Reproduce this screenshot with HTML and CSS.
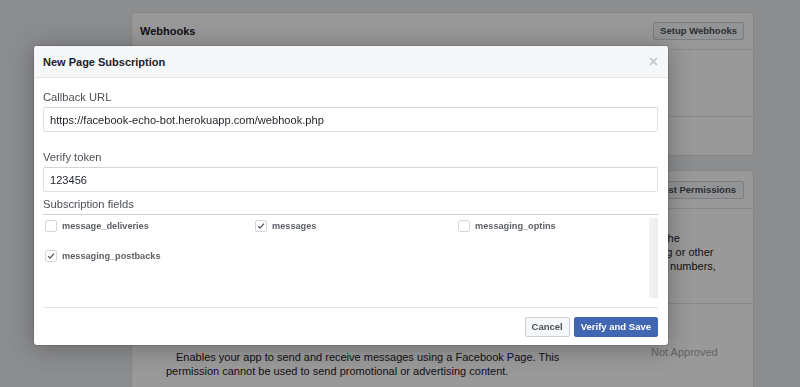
FILE: index.html
```html
<!DOCTYPE html>
<html lang="en">
<head>
    <meta charset="UTF-8">
    <meta name="viewport" content="width=device-width, initial-scale=1.0">
    <title>Messenger Settings</title>
    <link rel="stylesheet" href="styles.css">
</head>
<body>
    <div class="page">
        <section class="panel">
            <div class="panel-header">
                <h2>Webhooks</h2>
                <button class="btn">Setup Webhooks</button>
            </div>
            <div class="panel-row row-tall"></div>
            <div class="panel-row row-short"></div>
        </section>

        <section class="panel">
            <div class="panel-header panel-header-tall">
                <h2>App Review for Messenger</h2>
                <button class="btn">Request Permissions</button>
            </div>
            <div class="panel-row row-info">
                <p class="info-text">
                    messages through the<br>
                    customer messaging or other<br>
                    data such as phone numbers,
                </p>
            </div>
            <div class="panel-row row-perm">
                <div class="perm-desc">
                    <div class="perm-name">pages_messaging</div>
                    <p>Enables your app to send and receive messages using a Facebook Page. This<br>permission cannot be used to send promotional or advertising content.</p>
                </div>
                <div class="perm-status">Not Approved</div>
            </div>
        </section>
    </div>

    <div class="overlay"></div>

    <div class="modal">
        <div class="modal-header">
            <h3>New Page Subscription</h3>
            <svg class="close-icon" width="9" height="9" viewBox="0 0 9 9">
                <path d="M1 1 L8 8 M8 1 L1 8" stroke="#bec3c9" stroke-width="1.6" fill="none"/>
            </svg>
        </div>

        <div class="modal-body">
            <label class="field-label">Callback URL</label>
            <input class="text-input" type="text" value="https://facebook-echo-bot.herokuapp.com/webhook.php">

            <label class="field-label label-gap">Verify token</label>
            <input class="text-input" type="text" value="123456">

            <label class="field-label label-small-gap">Subscription fields</label>
            <div class="fields-box">
                <div class="fields-grid">
                    <div class="field-item">
                        <span class="checkbox"></span>
                        <span>message_deliveries</span>
                    </div>
                    <div class="field-item">
                        <span class="checkbox">
                            <svg width="10" height="10" viewBox="0 0 10 10"><path d="M2 5.2 L4 7.2 L8 2.6" stroke="#4b4f56" stroke-width="1.2" fill="none"/></svg>
                        </span>
                        <span>messages</span>
                    </div>
                    <div class="field-item">
                        <span class="checkbox"></span>
                        <span>messaging_optins</span>
                    </div>
                    <div class="field-item">
                        <span class="checkbox">
                            <svg width="10" height="10" viewBox="0 0 10 10"><path d="M2 5.2 L4 7.2 L8 2.6" stroke="#4b4f56" stroke-width="1.2" fill="none"/></svg>
                        </span>
                        <span>messaging_postbacks</span>
                    </div>
                </div>
                <div class="scroll-track"></div>
            </div>
        </div>

        <div class="modal-footer">
            <button class="btn">Cancel</button>
            <button class="btn btn-primary">Verify and Save</button>
        </div>
    </div>
</body>
</html>
```

FILE: styles.css
```css
/* Reset and base styles */
* {
    margin: 0;
    padding: 0;
    box-sizing: border-box;
}

body {
    font-family: "Liberation Sans", Helvetica, Arial, sans-serif;
    font-size: 11px;
    line-height: 14px;
    color: #1d2129;
    background: #e9ebee;
    overflow: hidden;
}

/* Page behind the dialog */
.page {
    width: 623px;
    margin-left: 131px;
    padding-top: 12px;
    display: flex;
    flex-direction: column;
    gap: 14px;
}

.panel {
    background: #fff;
    border: 1px solid #dddfe2;
    border-radius: 3px;
}

.panel-header {
    height: 37px;
    display: flex;
    justify-content: space-between;
    align-items: center;
    padding: 0 9px 0 8px;
    border-bottom: 1px solid #e5e5e5;
}

.panel-header-tall {
    height: 38px;
}

.panel-header h2 {
    font-size: 11px;
    font-weight: bold;
    color: #1d2129;
}

.panel-header-tall .btn {
    padding: 0 7px 0 8px;
}

.panel-row {
    border-bottom: 1px solid #e5e5e5;
}

.panel-row:last-child {
    border-bottom: none;
}

.row-tall {
    height: 67px;
}

.row-short {
    height: 38px;
}

.row-info {
    height: 95px;
    padding: 22px 0 0 439px;
}

.row-perm {
    display: grid;
    grid-template-columns: 485px 1fr;
    padding: 22px 0 40px 34px;
}

.perm-name {
    font-weight: bold;
    margin-bottom: 10px;
}

.perm-desc p {
    text-indent: 10px;
}

.perm-status {
    padding-top: 19px;
    color: #a3a6ab;
}

/* Buttons */
.btn {
    font-family: inherit;
    font-size: 9.5px;
    font-weight: bold;
    line-height: 16px;
    height: 18px;
    padding: 0 6px;
    color: #4b4f56;
    background: #f6f7f9;
    border: 1px solid #ced0d4;
    border-radius: 2px;
}

.btn-primary {
    color: #fff;
    background: #4267b2;
    border-color: #4267b2;
}

/* Overlay + dialog */
.overlay {
    position: fixed;
    inset: 0;
    background: rgba(0, 0, 0, 0.4);
}

.modal {
    position: fixed;
    left: 34px;
    top: 46px;
    width: 634px;
    background: #fff;
    border-radius: 3px;
    box-shadow: 0 2px 26px rgba(0, 0, 0, 0.3), 0 0 0 1px rgba(0, 0, 0, 0.1);
    overflow: hidden;
}

.modal-header {
    height: 32px;
    display: flex;
    justify-content: space-between;
    align-items: center;
    padding: 0 10px 0 9px;
    background: #f6f7f9;
    border-bottom: 1px solid #e5e5e5;
}

.modal-header h3 {
    font-size: 11px;
    font-weight: bold;
    color: #1d2129;
}

.modal-body {
    padding: 12px 10px 0 9px;
    display: flex;
    flex-direction: column;
}

.field-label {
    font-size: 11.2px;
    color: #4b4f56;
    margin-bottom: 3px;
}

.label-gap {
    margin-top: 18px;
}

.label-small-gap {
    margin-top: 5px;
}

.text-input {
    height: 25px;
    width: 100%;
    padding: 0 6px;
    font-family: inherit;
    font-size: 11.1px;
    color: #1d2129;
    border: 1px solid #dddfe2;
    border-top-color: #d3d5d9;
    border-radius: 2px;
    outline: none;
}

.fields-box {
    height: 84px;
    display: grid;
    grid-template-columns: 1fr 9px;
    border-top: 1px solid #ccd0d5;
}

.fields-grid {
    display: grid;
    grid-template-columns: 210px 203px 1fr;
    align-content: start;
    row-gap: 18px;
    padding: 5px 0 0 2px;
}

.field-item {
    display: flex;
    align-items: center;
    gap: 5px;
    height: 12px;
    font-size: 9.2px;
    font-weight: bold;
    color: #5d6168;
}

.checkbox {
    width: 12px;
    height: 12px;
    border: 1px solid #d3d6db;
    border-radius: 2px;
    background: #fff;
    display: flex;
    align-items: center;
    justify-content: center;
}

.scroll-track {
    margin-top: 3px;
    background: linear-gradient(to right, #f3f3f3, #ededed);
}

.modal-footer {
    margin: 9px 10px 0 9px;
    padding: 9px 0 8px;
    border-top: 1px solid #e5e5e5;
    display: flex;
    justify-content: flex-end;
    gap: 4px;
}

.modal-footer .btn {
    height: 20px;
    line-height: 18px;
}

.info-text {
    color: #1d2129;
}
```
